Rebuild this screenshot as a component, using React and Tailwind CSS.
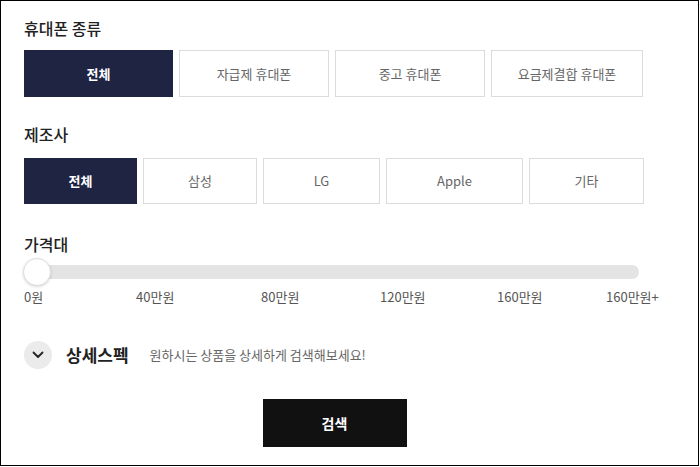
import React from "react";

const font = { fontFamily: '"Noto Sans CJK KR", "Noto Sans", sans-serif' };

const types = ["전체", "자급제 휴대폰", "중고 휴대폰", "요금제결합 휴대폰"];
const makers = [
  { label: "전체", w: "w-[113px]" },
  { label: "삼성", w: "w-[114px]" },
  { label: "LG", w: "w-[117px]" },
  { label: "Apple", w: "w-[137px]" },
  { label: "기타", w: "w-[115px]" },
];
const prices = [
  { label: "0원", w: "w-[112px]" },
  { label: "40만원", w: "w-[125px]" },
  { label: "80만원", w: "w-[119px]" },
  { label: "120만원", w: "w-[117px]" },
  { label: "160만원", w: "w-[109px]" },
  { label: "160만원+", w: "" },
];

function OptionButton({ label, active, className }) {
  return (
    <button
      className={`flex items-center justify-center text-[13px] ${
        active
          ? "bg-[#1f2442] text-white font-bold border border-[#1f2442]"
          : "bg-white text-[#666] border border-[#dcdcdc]"
      } ${className}`}
    >
      {label}
    </button>
  );
}

export default function App() {
  return (
    <div
      style={font}
      className="w-[699px] h-[466px] border border-black bg-white pl-[23px] pt-[15px] text-[#222]"
    >
      {/* 휴대폰 종류 */}
      <h3 className="text-[16px] font-medium leading-[24px]">휴대폰 종류</h3>
      <div className="mt-[10px] grid grid-cols-[149px_150px_150px_152px] gap-[6px] h-[47px]">
        {types.map((t, i) => (
          <OptionButton key={t} label={t} active={i === 0} />
        ))}
      </div>

      {/* 제조사 */}
      <h3 className="mt-[25px] text-[16px] font-medium leading-[24px]">제조사</h3>
      <div className="mt-[12px] flex gap-[6px] h-[46px]">
        {makers.map((m, i) => (
          <OptionButton key={m.label} label={m.label} active={i === 0} className={m.w} />
        ))}
      </div>

      {/* 가격대 */}
      <h3 className="mt-[28px] text-[16px] font-medium leading-[24px]">가격대</h3>
      <div className="relative mt-[2px] w-[615px] h-[28px] flex items-center">
        <div className="w-full h-[14px] rounded-full bg-[#e4e4e4]" />
        <div className="absolute left-[-1px] top-0 w-[28px] h-[28px] rounded-full bg-white border border-[#ddd] shadow-[0_1px_3px_rgba(0,0,0,0.15)]" />
      </div>
      <div className="mt-[1px] flex text-[13px] text-[#555] leading-[20px]">
        {prices.map((p) => (
          <span key={p.label} className={`shrink-0 ${p.w}`}>
            {p.label}
          </span>
        ))}
      </div>

      {/* 상세스펙 */}
      <div className="mt-[34px] flex items-center">
        <div className="w-[28px] h-[28px] rounded-full bg-[#ebebeb] flex items-center justify-center">
          <svg width="12" height="8" viewBox="0 0 12 8" fill="none">
            <path d="M1.5 1.5 L6 6 L10.5 1.5" stroke="#222" strokeWidth="1.8" strokeLinecap="round" strokeLinejoin="round" />
          </svg>
        </div>
        <span className="ml-[14px] text-[17px] font-bold">상세스펙</span>
        <span className="ml-[21px] text-[13px] text-[#666]">원하시는 상품을 상세하게 검색해보세요!</span>
      </div>

      {/* 검색 */}
      <div className="mt-[30px] w-[621px] flex justify-center">
        <button className="w-[144px] h-[48px] bg-[#111] text-white text-[14px] font-bold">검색</button>
      </div>
    </div>
  );
}
